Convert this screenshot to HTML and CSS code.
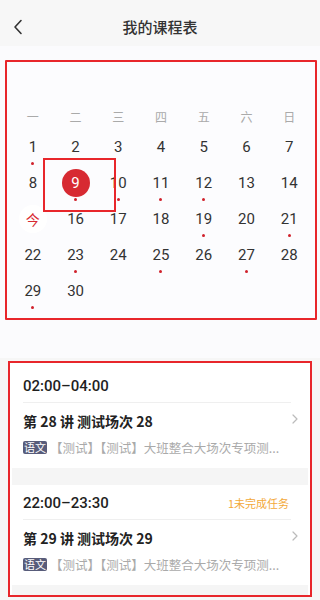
FILE: index.html
```html
<!DOCTYPE html>
<html lang="zh">
<head>
<meta charset="utf-8">
<link rel="stylesheet" href="styles.css">
</head>
<body>
<header class="nav">
  <svg class="back" width="10" height="16" viewBox="0 0 10 16"><path d="M8 1.5 L2 8 L8 14.5" fill="none" stroke="#333" stroke-width="1.6" stroke-linecap="round" stroke-linejoin="round"/></svg>
  <div class="title">我的课程表</div>
</header>

<div class="cal-wrap">
  <div class="cal">
    <div class="grid week">
      <div>一</div><div>二</div><div>三</div><div>四</div><div>五</div><div>六</div><div>日</div>
    </div>
    <div class="grid days">
      <div class="cell"><span class="num">1</span><i class="dot"></i></div>
      <div class="cell"><span class="num">2</span></div>
      <div class="cell"><span class="num">3</span></div>
      <div class="cell"><span class="num">4</span></div>
      <div class="cell"><span class="num">5</span></div>
      <div class="cell"><span class="num">6</span></div>
      <div class="cell"><span class="num">7</span></div>

      <div class="cell"><span class="num">8</span></div>
      <div class="cell sel"><span class="num">9</span><i class="dot"></i><span class="mark"></span></div>
      <div class="cell"><span class="num">10</span><i class="dot"></i></div>
      <div class="cell"><span class="num">11</span><i class="dot"></i></div>
      <div class="cell"><span class="num">12</span><i class="dot"></i></div>
      <div class="cell"><span class="num">13</span></div>
      <div class="cell"><span class="num">14</span></div>

      <div class="cell today"><span class="num">今</span></div>
      <div class="cell"><span class="num">16</span></div>
      <div class="cell"><span class="num">17</span></div>
      <div class="cell"><span class="num">18</span></div>
      <div class="cell"><span class="num">19</span><i class="dot"></i></div>
      <div class="cell"><span class="num">20</span></div>
      <div class="cell"><span class="num">21</span><i class="dot"></i></div>

      <div class="cell"><span class="num">22</span></div>
      <div class="cell"><span class="num">23</span><i class="dot"></i></div>
      <div class="cell"><span class="num">24</span></div>
      <div class="cell"><span class="num">25</span><i class="dot"></i></div>
      <div class="cell"><span class="num">26</span></div>
      <div class="cell"><span class="num">27</span><i class="dot"></i></div>
      <div class="cell"><span class="num">28</span></div>

      <div class="cell"><span class="num">29</span><i class="dot"></i></div>
      <div class="cell"><span class="num">30</span></div>
    </div>
  </div>
</div>

<div class="list-wrap">
  <div class="box">
    <div class="list">
      <div class="card first">
        <div class="time-row"><span class="time">02:00–04:00</span></div>
        <div class="divider"></div>
        <div class="title-row"><span class="ctitle">第 28 讲 测试场次 28</span>
          <svg class="chev" width="6" height="10" viewBox="0 0 6 10"><path d="M1 1 L5 5 L1 9" fill="none" stroke="#bbb" stroke-width="1.2" stroke-linecap="round" stroke-linejoin="round"/></svg>
        </div>
        <div class="tag-row"><span class="tag">语文</span><span class="desc">【测试】【测试】大班整合大场次专项测...</span></div>
      </div>
      <div class="card">
        <div class="time-row"><span class="time">22:00–23:30</span><span class="task">1未完成任务</span></div>
        <div class="divider"></div>
        <div class="title-row"><span class="ctitle">第 29 讲 测试场次 29</span>
          <svg class="chev" width="6" height="10" viewBox="0 0 6 10"><path d="M1 1 L5 5 L1 9" fill="none" stroke="#bbb" stroke-width="1.2" stroke-linecap="round" stroke-linejoin="round"/></svg>
        </div>
        <div class="tag-row"><span class="tag">语文</span><span class="desc">【测试】【测试】大班整合大场次专项测...</span></div>
      </div>
    </div>
  </div>
</div>
</body>
</html>
```

FILE: styles.css
```css
* { box-sizing: border-box; }
html, body { margin: 0; padding: 0; }
body {
  width: 320px;
  height: 600px;
  overflow: hidden;
  background: #fbfbfd;
  font-family: "Roboto", "Noto Sans CJK SC", sans-serif;
  color: #333;
}
.nav {
  height: 46px;
  background: #f7f7f7;
  display: flex;
  align-items: center;
  justify-content: center;
  position: relative;
}
.back { position: absolute; left: 13px; top: 19px; }
.title {
  font-family: "Noto Sans CJK SC", sans-serif;
  font-size: 15px;
  font-weight: 500;
  color: #333;
  margin-top: 7px;
}
.cal-wrap { padding: 14px 3px 0 5px; }
.cal {
  border: 2px solid #e8262b;
  border-radius: 1px;
  padding: 45px 0 1px;
  background: #fcfcfe;
}
.grid {
  width: 299px;
  margin: 0 auto;
  display: grid;
  grid-template-columns: repeat(7, 1fr);
}
.week {
  height: 20px;
  margin-bottom: 10px;
  font-family: "Noto Sans CJK SC", sans-serif;
  font-size: 12px;
  color: #aaa;
  text-align: center;
  line-height: 20px;
}
.days { grid-auto-rows: 36px; }
.cell {
  display: flex;
  flex-direction: column;
  align-items: center;
  position: relative;
}
.num {
  font-size: 15px;
  line-height: 20px;
  height: 20px;
  color: #333;
  position: relative;
  z-index: 1;
}
.dot {
  display: block;
  width: 3px;
  height: 3px;
  border-radius: 50%;
  background: #d0212b;
  margin-top: 5px;
}
.sel .num { color: #fff; }
.sel::before {
  content: "";
  position: absolute;
  left: 50%;
  top: -4px;
  width: 28px;
  height: 28px;
  margin-left: -14px;
  border-radius: 50%;
  background: #d72a32;
}
.mark {
  position: absolute;
  left: -11px;
  top: -15px;
  width: 73px;
  height: 54px;
  border: 2px solid #e8262b;
  z-index: 2;
}
.today .num {
  color: #d72a32;
  font-family: "Noto Sans CJK SC", sans-serif;
  font-size: 14px;
}
.today::before {
  content: "";
  position: absolute;
  left: 50%;
  top: -4px;
  width: 28px;
  height: 28px;
  margin-left: -14px;
  border-radius: 50%;
  background: #fff;
}
.list-wrap {
  margin-top: 38px;
  background: #f6f6f6;
  padding: 3px 8px 0;
  height: 242px;
}
.box {
  border: 2px solid #e8262b;
  background: #fff;
  padding: 0 2px;
}
.list {
  background: #f5f5f5;
  padding-bottom: 10px;
  display: flex;
  flex-direction: column;
  gap: 17px;
}
.card {
  background: #fff;
  padding: 8px 0 12px 11px;
}
.card.first { padding-top: 13px; }
.time-row {
  display: flex;
  justify-content: space-between;
  align-items: center;
  height: 20px;
  margin-right: 19px;
}
.time {
  font-size: 15px;
  font-weight: 500;
  color: #1f1f1f;
}
.task {
  font-family: "Noto Sans CJK SC", sans-serif;
  font-size: 11px;
  color: #f3a93a;
}
.divider {
  height: 1px;
  background: #efefef;
  margin: 6px 17px 0 0;
}
.title-row {
  display: flex;
  justify-content: space-between;
  align-items: center;
  height: 22px;
  margin-top: 7px;
  margin-right: 10px;
}
.ctitle {
  font-family: "Noto Sans CJK SC", sans-serif;
  font-size: 14px;
  font-weight: 700;
  color: #222;
}
.chev { margin-top: -4px; }
.tag-row {
  display: flex;
  align-items: center;
  height: 18px;
  margin-top: 6px;
  white-space: nowrap;
}
.tag {
  flex: none;
  font-family: "Noto Sans CJK SC", sans-serif;
  font-size: 11px;
  line-height: 13px;
  height: 13px;
  padding: 0 1px;
  background: #585c7a;
  color: #fff;
  border-radius: 2px;
}
.desc {
  margin-left: 3px;
  font-family: "Noto Sans CJK SC", sans-serif;
  font-size: 12.5px;
  color: #aaa;
  white-space: nowrap;
}
```
